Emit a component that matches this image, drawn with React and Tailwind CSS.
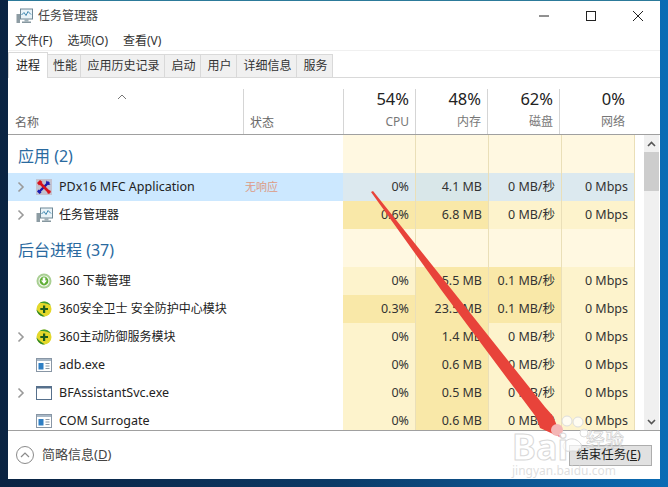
const font = '"Noto Sans", "Noto Sans CJK SC", sans-serif';

const Chevron = () => (
  <svg width="8" height="12" viewBox="0 0 8 12" className="block">
    <path d="M1.5 1.5 6 6l-4.5 4.5" fill="none" stroke="#9a9a9a" strokeWidth="1.6" />
  </svg>
);

const TaskIcon = () => (
  <svg width="17" height="16" viewBox="0 0 17 16" className="block">
    <rect x="0.5" y="6" width="3.5" height="9" fill="#8d9ca3" />
    <rect x="4.5" y="1" width="12" height="10" fill="#e9f3f8" stroke="#6f8896" />
    <path d="M5.5 7 8 4.5l2 3 2-4 3 3" fill="none" stroke="#3d87b0" strokeWidth="1" />
    <rect x="8.5" y="11" width="4" height="2.5" fill="#9fb0b8" />
    <rect x="6" y="13.5" width="9" height="1.5" fill="#86979f" />
  </svg>
);

const ToolsIcon = () => (
  <svg width="16" height="16" viewBox="0 0 16 16" className="block">
    <rect width="16" height="16" fill="#c3c3d0" />
    <path d="M3 13 13 3" stroke="#1c1cb0" strokeWidth="2.4" />
    <path d="M10.500 1.500 14.500 5.500 12 6 10 4z" fill="#1c1cb0" />
    <path d="M1 12.500 3.500 15 5.500 13.500 2.500 10.500z" fill="#1c1cb0" />
    <path d="M3.500 3.500 13 13" stroke="#d8121c" strokeWidth="2.6" />
    <path d="M1 4 4 1l2.500 2-3.500 3.500z" fill="#d8121c" />
    <path d="M11 14l3-3 1 2-2 2z" fill="#d8121c" />
  </svg>
);

const DownloadIcon = () => (
  <svg width="16" height="16" viewBox="0 0 16 16" className="block">
    <circle cx="8" cy="8" r="7.5" fill="#a9cf93" />
    <circle cx="8" cy="8" r="5.5" fill="#f3f8ef" />
    <circle cx="8" cy="8" r="4.4" fill="#5fae35" />
    <path d="M6.7 4.5h2.6v3h1.7L8 11 5 7.5h1.7z" fill="#fff" />
  </svg>
);

const ShieldIcon = () => (
  <svg width="16" height="16" viewBox="0 0 16 16" className="block">
    <circle cx="8" cy="8" r="7.5" fill="#e4d82a" />
    <path d="M.5 8.500c.5 4.500 4.500 7.500 8.500 7C6 13.500 3 12 .5 8.500z" fill="#2d8a2a" />
    <path d="M3 2.500C6-.5 12-.5 15 4.500 11.500 2.500 7 1.500 3 2.500z" fill="#3c9a34" />
    <path d="M7 4.500h2.200V7H12v2.100H9.200V12H7V9.100H4.300V7H7z" fill="#1d5c1c" />
  </svg>
);

const ExeIcon = () => (
  <svg width="16" height="14" viewBox="0 0 16 14" className="block">
    <rect x="0.500" y="0.500" width="15" height="13" fill="#fff" stroke="#8896a5" />
    <rect x="1" y="1" width="14" height="2" fill="#a9b8c6" />
    <rect x="2.500" y="5" width="5" height="6.500" fill="#2f7fc4" />
    <path d="M9.500 5.500h4M9.500 8h4M9.500 10.500h4" stroke="#8d99a5" />
  </svg>
);

const BlankIcon = () => (
  <svg width="16" height="14" viewBox="0 0 16 14" className="block">
    <rect x="0.500" y="0.500" width="15" height="13" fill="#fff" stroke="#56708c" />
    <rect x="1" y="1" width="14" height="1.500" fill="#56708c" />
  </svg>
);

const apps = [
  { name: 'PDx16 MFC Application', icon: <ToolsIcon />, expand: true, status: '无响应', selected: true, cpu: '0%', mem: '4.1 MB', disk: '0 MB/秒', net: '0 Mbps' },
  { name: '任务管理器', cjk: true, icon: <TaskIcon />, expand: true, cpu: '0.6%', mem: '6.8 MB', disk: '0 MB/秒', net: '0 Mbps', hotCpu: true },
];

const background = [
  { name: '360 下载管理', cjk: true, icon: <DownloadIcon />, cpu: '0%', mem: '5.5 MB', disk: '0.1 MB/秒', net: '0 Mbps', hotDisk: true },
  { name: '360安全卫士 安全防护中心模块', cjk: true, icon: <ShieldIcon />, cpu: '0.3%', mem: '23.5 MB', disk: '0.1 MB/秒', net: '0 Mbps', hotCpu: true, hotDisk: true },
  { name: '360主动防御服务模块', cjk: true, icon: <ShieldIcon />, expand: true, cpu: '0%', mem: '1.4 MB', disk: '0 MB/秒', net: '0 Mbps' },
  { name: 'adb.exe', icon: <ExeIcon />, cpu: '0%', mem: '0.6 MB', disk: '0 MB/秒', net: '0 Mbps' },
  { name: 'BFAssistantSvc.exe', icon: <BlankIcon />, expand: true, cpu: '0%', mem: '0.5 MB', disk: '0 MB/秒', net: '0 Mbps' },
  { name: 'COM Surrogate', icon: <ExeIcon />, cpu: '0%', mem: '0.6 MB', disk: '0 MB/秒', net: '0 Mbps' },
];

const tabs = [
  { label: '性能', w: 'w-[33px]' },
  { label: '应用历史记录', w: 'w-[84px]' },
  { label: '启动', w: 'w-[36px]' },
  { label: '用户', w: 'w-[36px]' },
  { label: '详细信息', w: 'w-[60px]' },
  { label: '服务', w: 'w-[36px]' },
];

const stats = [
  { pct: '54%', label: 'CPU', w: 'w-[73px]' },
  { pct: '48%', label: '内存', w: 'w-[73px]' },
  { pct: '62%', label: '磁盘', w: 'w-[73px]' },
  { pct: '0%', label: '网络', w: 'w-[73px]' },
];

const Cell = ({ bg, children }) => (
  <div className={`w-[73px] h-full shrink-0 border-r border-[#eadfb8] pr-[6px] flex items-center justify-end text-[12.500px] text-[#333] ${bg}`}>
    {children}
  </div>
);

const Row = ({ row }) => {
  const pale = row.selected ? 'bg-[#dce9ef]' : 'bg-[#fdf3cc]';
  const hot = 'bg-[#f9e8a8]';
  const memBg = row.selected ? 'bg-[#d9e7e9]' : hot;
  return (
    <div className="flex h-[28px] shrink-0">
      <div className={`w-[335px] shrink-0 flex items-center ${row.selected ? 'bg-[#cce8ff]' : ''}`}>
        <div className="w-[28px] pl-[9px] shrink-0">{row.expand && <Chevron />}</div>
        <div className="w-[23px] shrink-0">{row.icon}</div>
        <div className={`w-[186px] shrink-0 text-[#222] whitespace-nowrap ${row.cjk ? 'text-[12px]' : 'text-[12.500px]'}`}>{row.name}</div>
        {row.status && <div className="text-[11px] text-[#dd9a84]">{row.status}</div>}
      </div>
      <Cell bg={row.hotCpu ? hot : pale}>{row.cpu}</Cell>
      <Cell bg={memBg}>{row.mem}</Cell>
      <Cell bg={row.hotDisk ? hot : pale}>{row.disk}</Cell>
      <Cell bg={pale}>{row.net}</Cell>
    </div>
  );
};

const GroupRow = ({ title, h }) => (
  <div className={`flex shrink-0 ${h}`}>
    <div className="w-[335px] shrink-0 flex items-end pb-[7px] pl-[10px] text-[16px] leading-[20px] text-[#2a6a9f]">{title}</div>
    {stats.map((s) => (
      <div key={s.label} className="w-[73px] shrink-0 bg-[#fff8e1] border-r border-[#eadfb8]" />
    ))}
  </div>
);

export default function App() {
  return (
    <div className="relative w-[668px] h-[487px] overflow-hidden bg-gradient-to-r from-[#0a2342] via-[#0b3a66] to-[#0a6cb5] pl-2" style={{ fontFamily: font }}>
      <div className="w-[652px] h-[479px] bg-white border-t border-[#2c7a9a] flex flex-col">
        {/* title bar */}
        <div className="h-[30px] shrink-0 flex items-center pl-[8px]">
          <TaskIcon />
          <span className="ml-[5px] text-[12px] text-[#444]">任务管理器</span>
          <div className="ml-auto flex items-center">
            <svg width="12" height="12" viewBox="0 0 12 12" className="mr-[35px]"><path d="M1 6h10" stroke="#222" strokeWidth="1" /></svg>
            <svg width="12" height="12" viewBox="0 0 12 12" className="mr-[35px]"><rect x="1.500" y="1.500" width="9" height="9" fill="none" stroke="#222" /></svg>
            <svg width="12" height="12" viewBox="0 0 12 12" className="mr-[16px]"><path d="M1 1l10 10M11 1 1 11" stroke="#222" strokeWidth="1" /></svg>
          </div>
        </div>
        {/* menu */}
        <div className="h-[20px] shrink-0 flex items-center pl-[7px] gap-[15px] text-[12px] text-[#333] border-b border-[#f0f0f0]">
          <span>文件(F)</span>
          <span>选项(O)</span>
          <span>查看(V)</span>
        </div>
        {/* tabs */}
        <div className="h-[27px] shrink-0 flex items-end border-b border-[#d9d9d9]">
          <div className="w-[40px] h-[26px] -mb-px bg-white border border-b-0 border-[#d9d9d9] flex items-center justify-center text-[12px] text-[#222]">进程</div>
          {tabs.map((t) => (
            <div key={t.label} className={`${t.w} h-[23px] pl-[2px] bg-[#f0f0f0] border-t border-r border-[#d9d9d9] flex items-center justify-center text-[12px] text-[#333]`}>
              {t.label}
            </div>
          ))}
        </div>
        {/* column header */}
        <div className="h-[57px] shrink-0 flex border-b border-[#a0a0a0]">
          <div className="w-[235px] shrink-0 relative flex items-end pl-[7px] pb-[2px] text-[12px] text-[#666]">
            名称
            <svg width="10" height="6" viewBox="0 0 10 6" className="absolute left-[109px] top-[16px]"><path d="M1 5 5 1l4 4" fill="none" stroke="#777" /></svg>
          </div>
          <div className="w-[100px] shrink-0 flex items-end pl-[6px] pb-[2px] text-[12px] text-[#666] self-end h-[45px] border-l border-[#d5d5d5]">状态</div>
          {stats.map((s) => (
            <div key={s.label} className={`${s.w} shrink-0 self-end h-[45px] border-l border-[#d5d5d5] -mr-px last:mr-0 flex flex-col items-end justify-between pr-[7px] pb-[4px]`}>
              <span className="text-[16.500px] leading-[20px] text-[#222]">{s.pct}</span>
              <span className="text-[12px] leading-[16px] text-[#777]">{s.label}</span>
            </div>
          ))}
        </div>
        {/* table body */}
        <div className="flex-1 min-h-0 flex overflow-hidden">
          <div className="w-[627px] shrink-0 flex flex-col">
            <GroupRow title="应用 (2)" h="h-[38px]" />
            {apps.map((r) => <Row key={r.name} row={r} />)}
            <GroupRow title="后台进程 (37)" h="h-[38px]" />
            {background.map((r) => <Row key={r.name} row={r} />)}
          </div>
          <div className="ml-[9px] w-[15px] shrink-0 bg-[#f0f0f0] flex flex-col">
            <div className="h-[17px] flex items-center justify-center">
              <svg width="9" height="6" viewBox="0 0 9 6"><path d="M1 5 4.500 1.500 8 5" fill="none" stroke="#555" strokeWidth="1.600" /></svg>
            </div>
            <div className="h-[39px] bg-[#cdcdcd]" />
            <div className="flex-1" />
            <div className="h-[17px] flex items-center justify-center">
              <svg width="9" height="6" viewBox="0 0 9 6"><path d="M1 1 4.500 4.500 8 1" fill="none" stroke="#555" strokeWidth="1.600" /></svg>
            </div>
          </div>
        </div>
        {/* footer */}
        <div className="h-[49px] shrink-0 border-t border-[#a0a0a0] flex items-center pl-[8px] pr-[8px]">
          <svg width="18" height="18" viewBox="0 0 18 18"><circle cx="9" cy="9" r="8.500" fill="#fff" stroke="#8a8a8a" /><path d="M5 11l4-4 4 4" fill="none" stroke="#8a8a8a" strokeWidth="1.200" /></svg>
          <span className="ml-[8px] text-[13px] text-[#444]">简略信息(<span className="underline">D</span>)</span>
          <div className="ml-auto w-[83px] h-[21px] pr-[4px] bg-[#e1e1e1] border border-[#adadad] flex items-center justify-center text-[12.500px] text-[#222]">
            结束任务(<span className="underline">E</span>)
          </div>
        </div>
      </div>

      {/* red annotation arrow and baidu paw */}
      <svg width="668" height="487" viewBox="0 0 668 487" className="absolute left-0 top-0 pointer-events-none">
        <circle cx="567" cy="421" r="5" fill="#fff" fillOpacity="0.75" stroke="#dddddd" />
        <circle cx="578" cy="422" r="5" fill="#fff" fillOpacity="0.75" stroke="#dddddd" />
        <circle cx="584" cy="433" r="4" fill="#fff" fillOpacity="0.7" stroke="#dddddd" />
        <path d="M563 446c2-8 12-10 18-2 2 5-2 8-8 7-4 0-9 2-10-5z" fill="#fff" fillOpacity="0.7" stroke="#d5d5d5" />
        <polygon points="371,192 373,191 452,290 545,407 553,416 562,438 540,428 536,417 442,291" fill="#e8433a" />
        <circle cx="557" cy="430" r="6" fill="#f4b6b6" />
      </svg>

      {/* baidu watermark */}
      <div className="absolute left-[512px] top-[429px] text-[36px] leading-[36px] font-bold text-white/70 [-webkit-text-stroke:1px_#d8d8d8] pointer-events-none whitespace-nowrap">Bai</div>
      <div className="absolute left-[586px] top-[428px] text-[19px] leading-[24px] text-white/60 [-webkit-text-stroke:0.500px_#c4c4c4] pointer-events-none">经验</div>
      <div className="absolute left-[512px] top-[464px] text-[12px] leading-[14px] text-[#d0d0d0]/70 pointer-events-none whitespace-nowrap">jingyan.baidu.com</div>
    </div>
  );
}
